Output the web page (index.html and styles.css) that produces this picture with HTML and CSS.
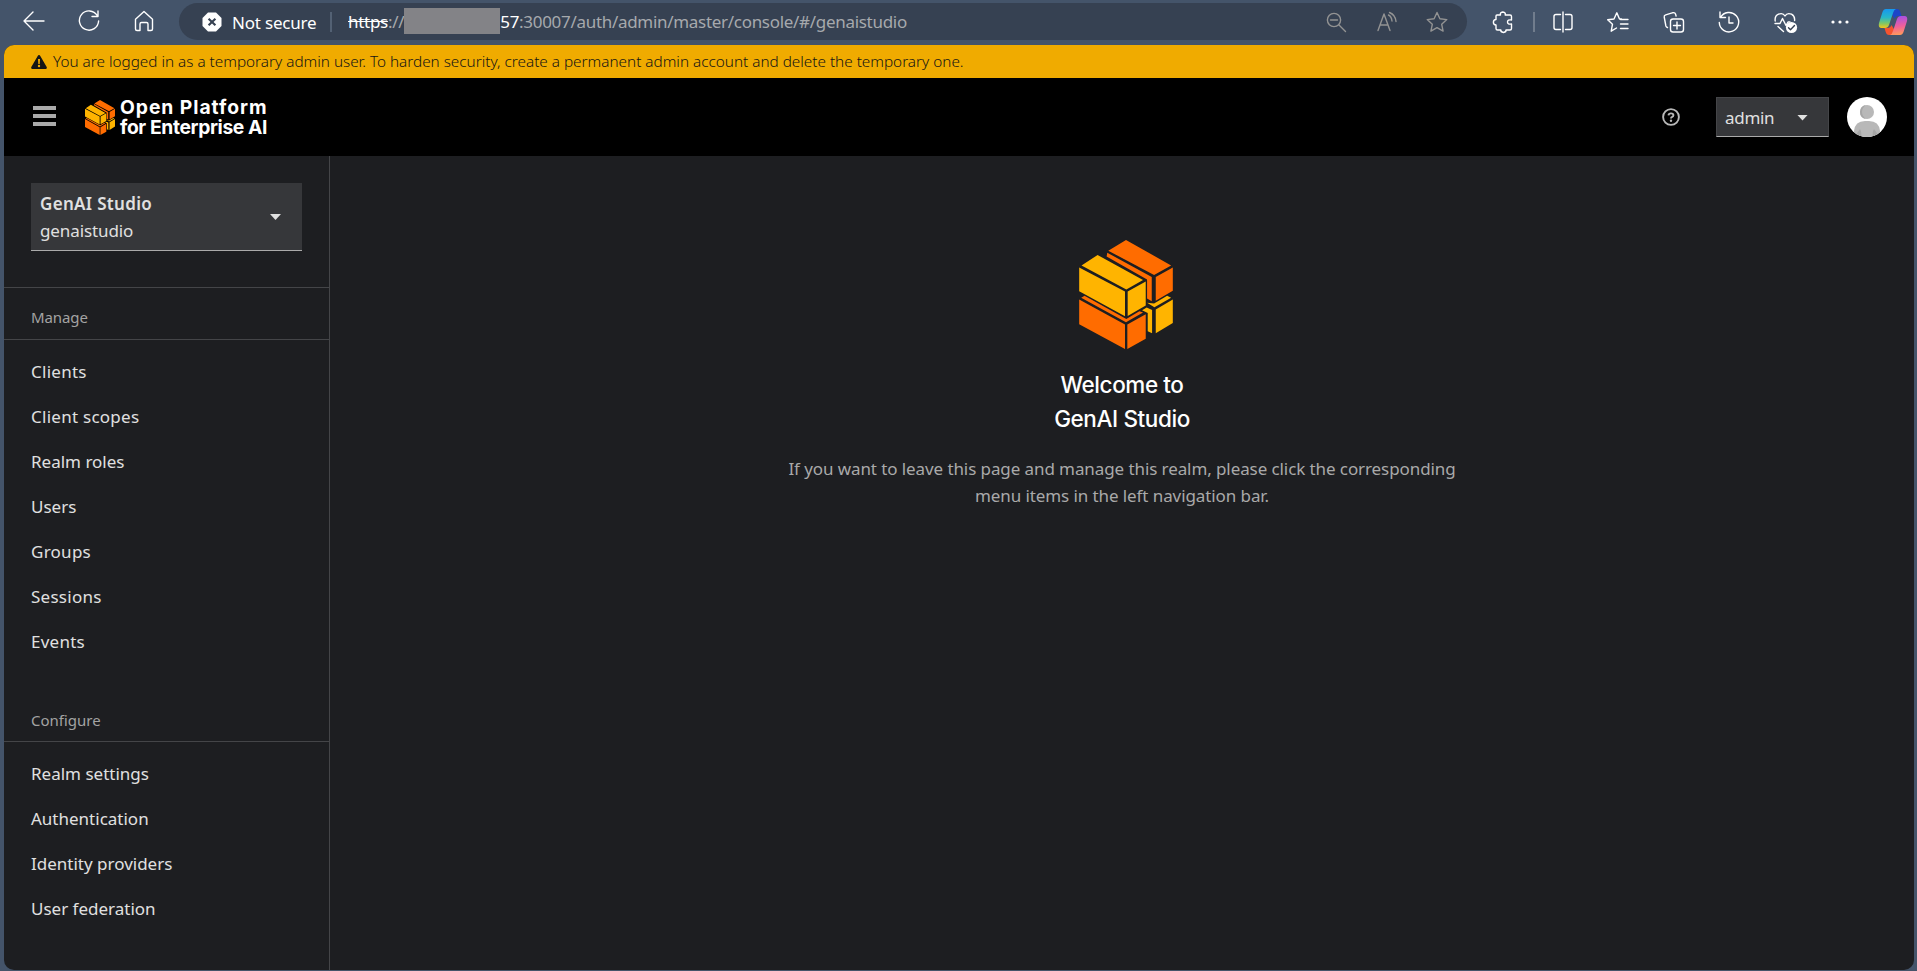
FILE: index.html
```html
<!DOCTYPE html>
<html lang="en">
<head>
<meta charset="utf-8">
<title>GenAI Studio - Administration Console</title>
<link rel="stylesheet" href="styles.css">
</head>
<body>
<svg class="defs" aria-hidden="true">
  <symbol id="cube" viewBox="117 62 280 326">
    <g fill="#ff6c00">
      <path d="M257 62 392 138 341 167 204 94ZM201 100 334 173V245L320 237V180L199 111ZM346 173 397 144V214L346 244Z"/>
      <path d="M133 229 258 298 297 275 308 279 257 308 123 235ZM117 240 254 315V388L117 314ZM261 315 316 284V357L261 388Z"/>
    </g>
    <g fill="#ffb400">
      <path d="M172 107 308 182 258 210 124 138ZM117 144 254 216V290L117 215ZM262 216 316 186V258L262 289Z"/>
      <path d="M380 229 392 235 342 263 320 250 341 252ZM305 272 319 264 335 271V341L322 335V280ZM346 270 397 240V310L346 341Z"/>
    </g>
  </symbol>
</svg>

<div class="browser">
  <div class="toolbar">
    <div class="tool-nav">
      <svg class="icon" viewBox="0 0 30 30"><path d="M25 15H5M14 6 5 15l9 9"/></svg>
      <svg class="icon" viewBox="0 0 30 30"><path d="M23.2 9.5A9.6 9.6 0 1 0 24.6 15M24 5v5.500h-6"/></svg>
      <svg class="icon" viewBox="0 0 30 30"><path d="M6.500 13.200 15 5.600l8.500 7.600V23q0 1.500-1.500 1.500h-3V18q0-1.500-1.500-1.500h-5Q11 16.500 11 18v6.500H8Q6.500 24.500 6.500 23Z"/></svg>
    </div>
    <div class="address">
      <svg class="bad-cert" viewBox="0 0 20 20"><path d="M6 .5h8L19.500 6v8L14 19.500H6L.5 14V6Z" fill="#fff"/><path d="m6.600 6.800 6.800 6.400m0-6.400-6.800 6.400" stroke="#364152" stroke-width="2.200"/></svg>
      <span class="not-secure">Not secure</span>
      <i class="address-sep"></i>
      <span class="scheme">https</span><span class="slashes">://</span><span class="redacted"></span><span class="host">57</span><span class="path">:30007/auth/admin/master/console/#/genaistudio</span>
      <div class="address-tools">
        <svg class="icon" viewBox="0 0 30 30"><circle cx="13" cy="13" r="6.600"/><path d="m18 18 6.500 6.500M9.500 13h7"/></svg>
        <svg class="icon" viewBox="0 0 30 30"><path d="M6 23.500 12 7l6 16.500M8.300 18h7.500M16.500 8q3 1.500 3.500 6M17.500 5.500q6 2.500 6.500 9"/></svg>
        <svg class="icon" viewBox="0 0 30 30"><path d="m15 5.500 2.900 6.300 6.900.8-5.100 4.700 1.400 6.800-6.100-3.400-6.100 3.400 1.400-6.800-5.100-4.700 6.900-.8Z"/></svg>
      </div>
    </div>
    <div class="tool-actions">
      <svg class="icon" viewBox="0 0 30 30"><path d="M9 8h3.500q-.8-2.500 2.300-3 3.200.5 2.400 3H22q1.500 0 1.500 1.500V13q-4-.6-4 2t4 2v4.500Q23.500 23 22 23h-4q.3 2-2.500 2.500-3-.5-2.700-2.500H9.500Q8 23 8 21.500V18q-2.600-.2-2.600-2.800T8 12.500V9q0-1 1-1Z"/></svg>
      <i class="tool-sep"></i>
      <svg class="icon" viewBox="0 0 30 30"><path d="M12.500 7.500H8Q6 7.500 6 9.500v11q0 2 2 2h4.500M17.500 7.500H22q2 0 2 2v11q0 2-2 2h-4.500M15 5v20"/></svg>
      <svg class="icon" viewBox="0 0 30 30"><path d="M18.500 12h-2L13.800 5.800 11 12l-6.300.8 4.800 4.400L8.200 24.200l5.300-3.200M17.500 12.500H25M17.500 17H25M17.500 21.500H25"/></svg>
      <svg class="icon" viewBox="0 0 30 30"><rect x="11.500" y="12" width="13" height="13" rx="2.500"/><path d="M18 15v7m-3.500-3.500h7M8.500 20.500q-1.200-.3-1.600-1.500L5.200 10q-.3-1.700 1.500-2.200L14 5.700q2-.4 2.500 1.300l.6 2"/></svg>
      <svg class="icon" viewBox="0 0 30 30"><path d="M6.500 10.500A9.700 9.700 0 1 1 5.300 15.500M6 5v5.500h5.500M15 10v6h4"/></svg>
      <svg class="icon" viewBox="0 0 30 30"><path d="M5.200 14Q4.500 9 8.500 7.200 13 5.500 15 9q2-3.500 6.500-1.800Q25 9 24.600 13.500M5 16.500h5l2.500-5 3.500 7 2-3.500h2M8 19.500l5.500 5"/><circle cx="21.500" cy="20.500" r="5.600" fill="#fff" stroke="none"/><path d="m18.500 20.700 2 2 4-4.200" stroke="#364152"/></svg>
      <svg class="icon" viewBox="0 0 30 30"><g fill="#fff" stroke="none"><circle cx="8" cy="15" r="1.600"/><circle cx="15" cy="15" r="1.600"/><circle cx="22" cy="15" r="1.600"/></g></svg>
      <svg class="icon copilot" viewBox="0 0 30 30">
        <defs>
          <linearGradient id="cp1" x1="0" y1="0" x2="0" y2="1"><stop offset="0" stop-color="#1697f0"/><stop offset=".45" stop-color="#27b7c8"/><stop offset=".75" stop-color="#7cc667"/><stop offset="1" stop-color="#f5c518"/></linearGradient>
          <linearGradient id="cp2" x1=".4" y1="0" x2=".5" y2="1"><stop offset="0" stop-color="#a44fe8"/><stop offset=".55" stop-color="#f0609a"/><stop offset="1" stop-color="#ff9a5a"/></linearGradient>
        </defs>
        <g stroke="none">
          <path d="M14 2h5q2.500 0 3.300 3l1.200 4h-3q-3 0-4 3l-3-5Z" fill="#1c45c8"/>
          <path d="M16 28h-5q-2.500 0-3.300-3L6.500 21h3q3 0 4-3l3 5Z" fill="#f4532f"/>
          <path d="M8 2h10q-2 .5-3 4l-4 12q-1 3-4 3H3q-3-.5-2-5L4.500 5Q5.500 2 8 2Z" fill="url(#cp1)"/>
          <path d="M22 28H12q2-.5 3-4l4-12q1-3 4-3h4q3 .5 2 5l-3.500 11q-1 3-3.500 3Z" fill="url(#cp2)"/>
        </g>
      </svg>
    </div>
  </div>

  <div class="page">
    <div class="banner">
      <svg class="warn" viewBox="0 0 16 14"><path d="M8 0q.8 0 1.300.9l6.400 11Q16.300 14 14.500 14h-13Q-.3 14 .3 11.900L6.700.9Q7.200 0 8 0Z" fill="#151515"/><path d="M7 4h2l-.3 5H7.300Z" fill="#f0ab00"/><circle cx="8" cy="11" r="1.200" fill="#f0ab00"/></svg>
      <span class="banner-text">You are logged in as a temporary admin user. To harden security, create a permanent admin account and delete the temporary one.</span>
    </div>
    <header class="masthead">
      <div class="burger"><i></i><i></i><i></i></div>
      <svg class="brand-cube"><use href="#cube"/></svg>
      <div class="brand-name"><span class="brand-top">Open Platform</span><span class="brand-bottom">for Enterprise AI</span></div>
      <div class="masthead-tools">
        <svg class="help" viewBox="0 0 18 18"><circle cx="9" cy="9" r="7.900" fill="none" stroke="#b8b8b8" stroke-width="1.900"/><path d="M6.500 7.300Q6.700 5.400 9 5.400q2.400 0 2.400 1.900 0 1-1.200 1.600Q9 9.400 9 10.400" fill="none" stroke="#b8b8b8" stroke-width="1.900"/><circle cx="9" cy="12.700" r="1.200" fill="#b8b8b8"/></svg>
        <div class="user-select"><span class="user-name">admin</span><i class="caret"></i></div>
        <svg class="avatar" viewBox="0 0 40 40"><defs><clipPath id="round"><circle cx="20" cy="20" r="20"/></clipPath></defs><circle cx="20" cy="20" r="20" fill="#fff"/><g clip-path="url(#round)"><path d="M7 40V34q1-10 11-10h4q10 0 11 10v6Z" fill="#b8b8b8"/><path d="M14 40q1-5-1-8-3 3-4 8ZM26 40q-1-5 1-8 3 3 4 8Z" fill="#a6a6a6"/><circle cx="20" cy="15" r="7" fill="#b8b8b8"/><path d="M19 8q-6 1-6 7t6 7q-4-3-4-7t4-7Z" fill="#a6a6a6"/></g></svg>
      </div>
    </header>
    <div class="body">
      <nav class="sidebar">
        <div class="realm-wrap">
          <div class="realm-select">
            <div><div class="realm-title">GenAI Studio</div><div class="realm-id">genaistudio</div></div>
            <i class="caret"></i>
          </div>
        </div>
        <h2 class="nav-title">Manage</h2>
        <ul class="nav-list">
          <li class="loose">Clients</li><li class="loose">Client scopes</li><li>Realm roles</li><li>Users</li><li class="loose">Groups</li><li class="loose">Sessions</li><li class="loose">Events</li>
        </ul>
        <h2 class="nav-title configure">Configure</h2>
        <ul class="nav-list">
          <li>Realm settings</li><li>Authentication</li><li>Identity providers</li><li>User federation</li>
        </ul>
      </nav>
      <main class="content">
        <svg class="hero-cube"><use href="#cube"/></svg>
        <h1 class="hero-title">Welcome to<br>GenAI Studio</h1>
        <p class="hero-text">If you want to leave this page and manage this realm, please click the corresponding<br>menu items in the left navigation bar.</p>
      </main>
    </div>
  </div>
</div>
</body>
</html>
```
FILE: styles.css
```css
* { box-sizing: border-box; }
body { margin: 0; background: #44546a; font-family: "Noto Sans", "Open Sans", sans-serif; color: #e0e0e0; }
.defs { display: block; width: 0; height: 0; }
.browser { display: flex; flex-direction: column; width: 1917px; height: 971px; overflow: hidden; padding: 0 3px 1px 4px; }

.toolbar { flex: none; display: flex; align-items: flex-start; height: 45px; padding-top: 3px; }
.icon { flex: none; width: 30px; height: 30px; fill: none; stroke: #fff; stroke-width: 1.4; stroke-linejoin: round; stroke-linecap: round; }
.tool-nav { display: flex; align-items: center; gap: 25px; width: 175px; height: 36px; padding-left: 15px; }
.address { display: flex; align-items: center; width: 1288px; height: 37px; padding: 0 15px 0 23px; border-radius: 19px; background: #364152; font-size: 17px; line-height: 35px; letter-spacing: -0.3px; white-space: nowrap; }
.bad-cert { width: 20px; height: 20px; margin-right: 10px; }
.not-secure { width: 98px; padding-top: 1px; color: #fff; letter-spacing: -0.2px; }
.address-sep { width: 2px; height: 20px; margin-right: 16px; background: #536174; }
.scheme { color: #fff; text-decoration: line-through; }
.slashes, .path { color: #a6a9ad; }
.redacted { width: 96px; height: 26px; margin-bottom: 2px; background: #838387; }
.host { color: #fff; }
.address-tools { display: flex; gap: 20.5px; margin-left: auto; }
.address-tools .icon { stroke: #939393; }
.tool-actions { display: flex; align-items: center; height: 37px; padding-left: 8px; }
.tool-actions .icon { margin: 0 12.7px; }
.tool-actions .icon.copilot { margin: 0 0 0 10px; }
.tool-sep { width: 2px; height: 20px; margin-left: 3px; background: #717d8d; }

.page { flex: 1; display: flex; flex-direction: column; min-height: 0; border-radius: 10px; overflow: hidden; background: #1d1e21; }
.banner { flex: none; display: flex; align-items: center; height: 33px; padding-left: 27px; background: #f0ab00; color: #151515; font-size: 15.3px; font-weight: 300; line-height: 33px; white-space: nowrap; }
.warn { width: 16px; height: 14px; margin-right: 6px; }
.masthead { flex: none; display: flex; align-items: center; height: 78px; padding: 0 27px 0 29px; background: #000; }
.burger { display: flex; flex-direction: column; gap: 4px; width: 23px; margin-bottom: 3px; }
.burger i { height: 4px; background: #aaa; }
.brand-cube { width: 30px; height: 35px; margin-left: 29px; }
.brand-name { display: flex; flex-direction: column; width: 150px; margin: 0 0 0 5px; color: #fff; font: 700 19.3px/20.5px Inter, sans-serif; white-space: nowrap; }
.brand-top { letter-spacing: 0.95px; }
.brand-bottom { letter-spacing: -0.38px; }
.masthead-tools { display: flex; align-items: center; margin-left: auto; }
.help { width: 18px; height: 18px; }
.user-select { display: flex; align-items: center; justify-content: space-between; width: 113px; height: 40px; margin: 0 18px 0 36px; padding: 0 20px 0 8px; background: #36373a; border: 1px solid #444548; border-bottom-color: #aaa; font-size: 17px; }
.user-name { letter-spacing: -0.3px; }
.caret { width: 11px; height: 6px; margin-top: 1px; background: #e0e0e0; clip-path: polygon(0 0, 100% 0, 50% 100%); }
.avatar { width: 40px; height: 40px; }

.body { flex: 1; display: flex; min-height: 0; }
.sidebar { flex: none; width: 326px; border-right: 1px solid #444548; }
.realm-wrap { height: 132px; padding: 27px 27px 0; border-bottom: 1px solid #444548; }
.realm-select { display: flex; justify-content: space-between; align-items: center; height: 68px; padding: 0 21px 0 9px; background: #36373a; border-bottom: 1px solid #aaa; font-size: 17px; line-height: 27px; }
.realm-title { font-weight: 600; letter-spacing: 0.32px; }
.realm-id { letter-spacing: -0.1px; }
.nav-title { height: 52px; margin: 0; padding: 14px 27px 0; border-bottom: 1px solid #444548; color: #a3a3a3; font-size: 15px; font-weight: 400; line-height: 30px; letter-spacing: -0.1px; }
.nav-title.configure { padding-top: 15px; letter-spacing: 0; }
.nav-list { margin: 0 0 26px; padding: 9px 0 0; list-style: none; font-size: 17px; line-height: 45px; }
.nav-list li { padding: 0 27px; }
.nav-list .loose { letter-spacing: 0.26px; }
.content { flex: 1; display: flex; flex-direction: column; align-items: center; padding-top: 84px; text-align: center; }
.hero-cube { width: 94px; height: 109px; margin-left: 8px; }
.hero-title { margin: 19px 0 0; color: #fff; font: 500 22.5px/34px Inter, sans-serif; letter-spacing: -0.4px; }
.hero-text { margin: 19px 0 0; color: #a9a9a9; font-size: 17px; line-height: 27px; letter-spacing: -0.09px; }
```
